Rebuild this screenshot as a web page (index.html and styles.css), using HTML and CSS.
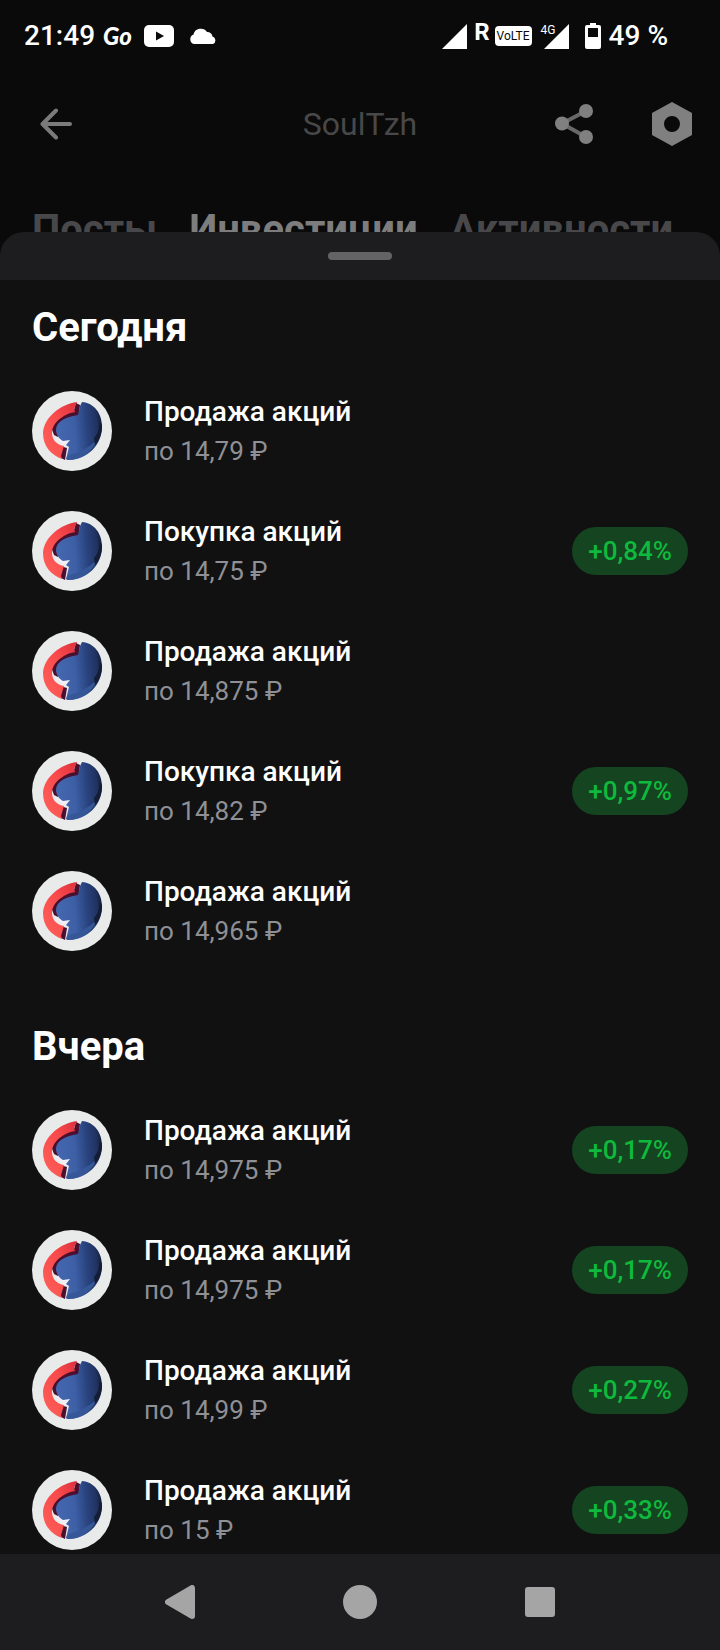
FILE: index.html
```html
<!DOCTYPE html>
<html lang="ru">
<head>
  <meta charset="UTF-8">
  <title>SoulTzh</title>
  <meta name="viewport" content="width=device-width, initial-scale=1.0">
  <link rel="stylesheet" href="styles.css">
</head>
<body>
  <!-- Shared logo of the share -->
  <svg class="sprite" aria-hidden="true">
    <defs>
      <linearGradient id="blue" x1="0" y1="0.4" x2="1" y2="0.3">
        <stop offset="0" stop-color="#4468b0"/>
        <stop offset="0.4" stop-color="#3d5fa6"/>
        <stop offset="0.65" stop-color="#2a4480"/>
        <stop offset="0.88" stop-color="#203260"/>
        <stop offset="1" stop-color="#141b34"/>
      </linearGradient>
      <linearGradient id="red" x1="1" y1="0" x2="0" y2="1">
        <stop offset="0" stop-color="#dc2f3c"/>
        <stop offset="0.4" stop-color="#f84a4b"/>
        <stop offset="1" stop-color="#ff605a"/>
      </linearGradient>
    </defs>
    <symbol id="logo" viewBox="0 0 80 80">
      <circle cx="40" cy="40" r="40" fill="#e9ebea"/>
      <path d="M44 12L48 14L47 24L40 28L28 34L26 46L22 44L19 36L26 26L42 19Z" fill="#4b1030"/>
      <path d="M28 55L35 57L33 69L29 67Z" fill="#4b1030"/>
      <path d="M45 11C29 13 12 26 11 42C11 55 19 64 30 68L29 65L32 55C25 54 20 49 20 42C20 32 31 23 43 21L42 18Z" fill="url(#red)"/>
      <path d="M23 47L28 46L38 49L35 55L31 54Z" fill="#f2eef4"/>
      <path d="M50 11C62 12 70 22 70 36C70 53 56 69 36 69L34 68L37 56L34 54L38 49L31 50C27 48 24 43 24 39C24 31 33 26 46 24L48 15Z" fill="url(#blue)"/>
      <path d="M37 64C49 61 57 56 65 49C60 61 49 69 36 69L34 68Z" fill="#365797"/>
      <path d="M70 34C70 43 67 50 63 54L62 47C66 43 67 38 68 30Z" fill="#151d36"/>
    </symbol>
  </svg>

  <div class="screen">
    <div class="status-bar">
      <div class="status-left">
        <span class="clock">21:49</span>
        <span class="go">Go</span>
        <svg class="youtube" viewBox="0 0 30 22"><rect width="30" height="22" rx="5" fill="#fff"/><path d="M12 6.500L20 11L12 15.500Z" fill="#0a0a0a"/></svg>
        <svg class="cloud" viewBox="0 0 28 16"><path d="M5 16A5 5 0 0 1 4.500 6.500A7.500 7.500 0 0 1 18 4A5.500 5.500 0 0 1 23.500 8.500A4 4 0 0 1 24 16Z" fill="#fff"/></svg>
      </div>
      <div class="status-right">
        <svg class="signal" viewBox="0 0 25 25"><path d="M25 0V25H0Z" fill="#fff"/></svg>
        <span class="roaming">R</span>
        <span class="volte">VoLTE</span>
        <span class="mobile">
          <svg class="signal" viewBox="0 0 25 25"><path d="M25 0V25H0Z" fill="#fff"/></svg>
          <span class="mobile-type">4G</span>
        </span>
        <svg class="battery" viewBox="0 0 16 26"><path d="M5 0H11V2H14Q16 2 16 4V24Q16 26 14 26H2Q0 26 0 24V4Q0 2 2 2H5Z" fill="#fff"/><path d="M3 5H13V14H3Z" fill="#0a0a0a"/></svg>
        <span class="charge">49 %</span>
      </div>
    </div>

    <header class="app-bar">
      <button class="icon-btn" type="button" aria-label="Назад">
        <svg width="32" height="32" viewBox="0 0 32 32"><path d="M30 16H2.500M16 2.500L2.500 16L16 29.500" fill="none" stroke="#7b7b7b" stroke-width="4" stroke-linecap="round" stroke-linejoin="round"/></svg>
      </button>
      <h1 class="app-title">SoulTzh</h1>
      <div class="app-actions">
        <button class="icon-btn" type="button" aria-label="Поделиться">
          <svg width="38" height="40" viewBox="0 0 38 40"><path d="M31 7L7 19.500L31 33" fill="none" stroke="#686868" stroke-width="4"/><g fill="#808080"><circle cx="31" cy="7" r="7"/><circle cx="7" cy="19.500" r="7"/><circle cx="31" cy="33" r="7"/></g></svg>
        </button>
        <button class="icon-btn" type="button" aria-label="Настройки">
          <svg width="40" height="44" viewBox="0 0 40 44"><path d="M20 0L40 11V33L20 44L0 33V11ZM20 14A8 8 0 1 0 20 30A8 8 0 1 0 20 14Z" fill="#808080" fill-rule="evenodd"/></svg>
        </button>
      </div>
    </header>

    <nav class="tabs">
      <a href="#posts">Посты</a>
      <a class="active" href="#invest">Инвестиции</a>
      <a href="#activity">Активности</a>
    </nav>

    <main class="sheet">
      <div class="sheet-top"><span class="handle"></span></div>
      <div class="sheet-body">
        <section class="day">
          <h2>Сегодня</h2>
          <ul class="deals">
            <li class="deal">
              <svg class="logo"><use href="#logo"/></svg>
              <div class="deal-text"><p class="deal-name">Продажа акций</p><p class="deal-price">по 14,79 ₽</p></div>
            </li>
            <li class="deal">
              <svg class="logo"><use href="#logo"/></svg>
              <div class="deal-text"><p class="deal-name">Покупка акций</p><p class="deal-price">по 14,75 ₽</p></div>
              <span class="profit">+0,84%</span>
            </li>
            <li class="deal">
              <svg class="logo"><use href="#logo"/></svg>
              <div class="deal-text"><p class="deal-name">Продажа акций</p><p class="deal-price">по 14,875 ₽</p></div>
            </li>
            <li class="deal">
              <svg class="logo"><use href="#logo"/></svg>
              <div class="deal-text"><p class="deal-name">Покупка акций</p><p class="deal-price">по 14,82 ₽</p></div>
              <span class="profit">+0,97%</span>
            </li>
            <li class="deal">
              <svg class="logo"><use href="#logo"/></svg>
              <div class="deal-text"><p class="deal-name">Продажа акций</p><p class="deal-price">по 14,965 ₽</p></div>
            </li>
          </ul>
        </section>

        <section class="day">
          <h2>Вчера</h2>
          <ul class="deals">
            <li class="deal">
              <svg class="logo"><use href="#logo"/></svg>
              <div class="deal-text"><p class="deal-name">Продажа акций</p><p class="deal-price">по 14,975 ₽</p></div>
              <span class="profit">+0,17%</span>
            </li>
            <li class="deal">
              <svg class="logo"><use href="#logo"/></svg>
              <div class="deal-text"><p class="deal-name">Продажа акций</p><p class="deal-price">по 14,975 ₽</p></div>
              <span class="profit">+0,17%</span>
            </li>
            <li class="deal">
              <svg class="logo"><use href="#logo"/></svg>
              <div class="deal-text"><p class="deal-name">Продажа акций</p><p class="deal-price">по 14,99 ₽</p></div>
              <span class="profit">+0,27%</span>
            </li>
            <li class="deal">
              <svg class="logo"><use href="#logo"/></svg>
              <div class="deal-text"><p class="deal-name">Продажа акций</p><p class="deal-price">по 15 ₽</p></div>
              <span class="profit">+0,33%</span>
            </li>
          </ul>
        </section>
      </div>
    </main>

    <!-- System buttons -->
    <div class="system-nav">
      <button class="icon-btn" type="button" aria-label="Назад">
        <svg width="30" height="34" viewBox="0 0 30 34"><path d="M27 3V31L3 17Z" fill="#a5a5a5" stroke="#a5a5a5" stroke-width="6" stroke-linejoin="round"/></svg>
      </button>
      <button class="icon-btn" type="button" aria-label="Домой">
        <svg width="34" height="34" viewBox="0 0 34 34"><circle cx="17" cy="17" r="17" fill="#a5a5a5"/></svg>
      </button>
      <button class="icon-btn" type="button" aria-label="Недавние">
        <svg width="30" height="30" viewBox="0 0 30 30"><rect width="30" height="30" rx="3" fill="#a5a5a5"/></svg>
      </button>
    </div>
  </div>
</body>
</html>
```
FILE: styles.css
```css
* {
  box-sizing: border-box;
}
body, h1, h2, p, ul {
  margin: 0;
  padding: 0;
}
body {
  background: #0a0a0a;
  color: #fff;
  font-family: Roboto, "Liberation Sans", sans-serif;
}
svg {
  display: block;
  flex: none;
}
.sprite {
  position: absolute;
  width: 0;
  height: 0;
}
.screen {
  height: 100vh;
  display: flex;
  flex-direction: column;
  overflow: hidden;
}
.icon-btn {
  display: flex;
  align-items: center;
  justify-content: center;
  padding: 0;
  border: none;
  background: none;
  cursor: pointer;
}

/* Status bar */
.status-bar {
  flex: none;
  height: 72px;
  padding: 0 52px 0 24px;
  display: flex;
  align-items: center;
  justify-content: space-between;
}
.status-left, .status-right {
  display: flex;
  align-items: center;
}
.clock, .charge {
  font-size: 28px;
  line-height: 32px;
  font-weight: 500;
}
.go {
  margin: 0 12px 0 8px;
  font-family: Lato, sans-serif;
  font-size: 24px;
  line-height: 32px;
  font-weight: 900;
  font-style: italic;
}
.youtube {
  width: 30px;
  height: 22px;
}
.cloud {
  width: 28px;
  height: 16px;
  margin-left: 15px;
}
.signal {
  width: 25px;
  height: 25px;
}
.roaming {
  align-self: flex-start;
  margin: 0 5px 0 7px;
  font-size: 24px;
  line-height: 24px;
  font-weight: 700;
}
.volte {
  height: 20px;
  margin-right: 12px;
  padding: 0 2px;
  border-radius: 4px;
  background: #fff;
  color: #0a0a0a;
  font-size: 12px;
  line-height: 20px;
}
.mobile {
  position: relative;
}
.mobile-type {
  position: absolute;
  top: 0;
  left: -3px;
  font-size: 12px;
  line-height: 12px;
}
.battery {
  width: 16px;
  height: 26px;
  margin: 0 8px 0 16px;
}

/* App bar */
.app-bar {
  flex: none;
  height: 104px;
  padding: 0 28px;
  display: grid;
  grid-template-columns: 1fr auto 1fr;
  align-items: center;
}
.app-bar > .icon-btn {
  justify-self: start;
  padding-left: 12px;
}
.app-title {
  color: #484848;
  font-size: 32px;
  line-height: 40px;
  font-weight: 400;
}
.app-actions {
  display: flex;
  align-items: center;
  justify-content: flex-end;
  gap: 59px;
}
.tabs {
  flex: none;
  height: 56px;
  padding: 30px 32px 0;
  display: flex;
  gap: 32px;
}
.tabs a {
  color: #48484a;
  font-size: 40px;
  line-height: 48px;
  font-weight: 700;
  text-decoration: none;
}
.tabs .active {
  color: #7d7d7d;
}

/* Bottom sheet, slides over the tabs */
.sheet {
  position: relative;
  flex: 1;
  min-height: 0;
  display: flex;
  flex-direction: column;
}
.sheet-top {
  flex: none;
  height: 48px;
  padding-top: 20px;
  border-radius: 24px 24px 0 0;
  background: #1d1d1f;
}
.handle {
  display: block;
  width: 64px;
  height: 8px;
  margin: 0 auto;
  border-radius: 4px;
  background: #636365;
}
.sheet-body {
  flex: 1;
  min-height: 0;
  padding: 0 32px;
  overflow: hidden;
  background: #111;
}
.day {
  padding-bottom: 28px;
}
.day h2 {
  padding: 24px 0 19px;
  font-size: 40px;
  line-height: 48px;
  font-weight: 700;
}
.deals {
  list-style: none;
}
.deal {
  height: 120px;
  display: flex;
  align-items: center;
  gap: 32px;
}
.logo {
  width: 80px;
  height: 80px;
}
.deal-text {
  flex: 1;
}
.deal-name {
  font-size: 28px;
  line-height: 40px;
  font-weight: 500;
}
.deal-price {
  color: #8f9096;
  font-size: 26px;
  line-height: 38px;
}
.profit {
  padding: 0 16px;
  border-radius: 24px;
  background: #144420;
  color: #0fb93d;
  font-size: 26px;
  line-height: 48px;
  font-weight: 500;
}

.system-nav {
  flex: none;
  height: 96px;
  padding: 0 calc(100% / 8);
  display: grid;
  grid-template-columns: repeat(3, 1fr);
  background: #1d1d1f;
}
```
